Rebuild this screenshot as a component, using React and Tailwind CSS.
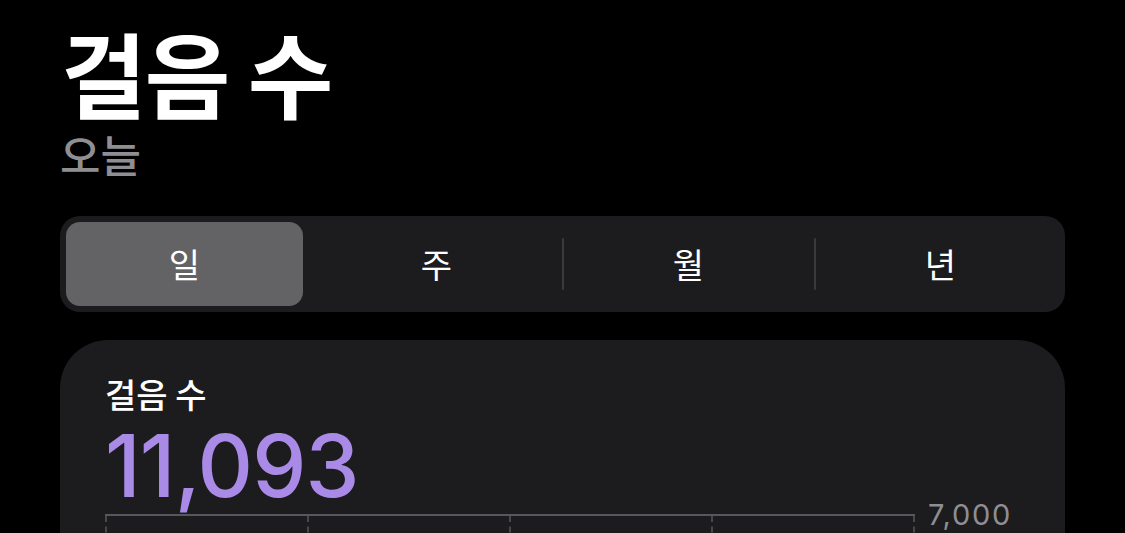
import React from 'react';

const segments = ['일', '주', '월', '년'];

export default function App() {
  const selected = 0;

  return (
    <div className="min-h-[533px] h-[533px] overflow-hidden bg-black px-[60px] pt-[26px] text-white" style={{ fontFamily: '"Noto Sans CJK KR", "Noto Sans", sans-serif' }}>
      {/* Header */}
      <h1 className="ml-[1px] text-[93px] leading-[92px] font-bold tracking-[-0.02em]">걸음 수</h1>
      <p className="mt-[12px] text-[44px] leading-[48px] font-medium text-[#8e8e93]">오늘</p>

      {/* Segmented control */}
      <div className="mt-[38px] flex h-[96px] items-stretch gap-[15px] rounded-[20px] bg-[#1c1c1e] p-[6px]">
        {segments.map((s, i) => (
          <div key={s} className="relative flex-1">
            <button
              className={`flex h-full w-full items-center justify-center rounded-[14px] text-[34px] leading-none ${i === selected ? 'bg-[#636366]' : ''}`}
            >
              {s}
            </button>
            {i > 1 && (
              <span className="absolute left-[-8px] top-[16px] h-[52px] w-[2px] rounded-full bg-[#3a3a3c]" />
            )}
          </div>
        ))}
      </div>

      {/* Steps card */}
      <div className="mt-[28px] h-[260px] rounded-[48px] bg-[#1c1c1e] pl-[45px] pr-[50px] pt-[34px]">
        <div className="text-[34px] leading-[40px] font-medium">걸음 수</div>
        <div className="mt-[9px] text-[86px] leading-[86px] font-medium tracking-[-0.01em] text-[#a98ae6]" style={{ fontFamily: 'Inter, "Noto Sans", sans-serif' }}>
          11,093
        </div>
        <div className="mt-[5px] flex items-start">
          <div className="relative h-[60px] w-[810px] border-t-2 border-[#58585c]">
            {[0, 1, 2, 3, 4].map((n) => (
              <span
                key={n}
                className="absolute top-0 h-full w-0 border-l-2 border-dashed border-[#48484a]"
                style={{ left: `${n * 202}px` }}
              />
            ))}
          </div>
          <span className="-mt-[16px] ml-[13px] text-[29px] leading-[34px] tracking-[0.06em] text-[#8e8e93]" style={{ fontFamily: 'Inter, "Noto Sans", sans-serif' }}>
            7,000
          </span>
        </div>
      </div>
    </div>
  );
}
